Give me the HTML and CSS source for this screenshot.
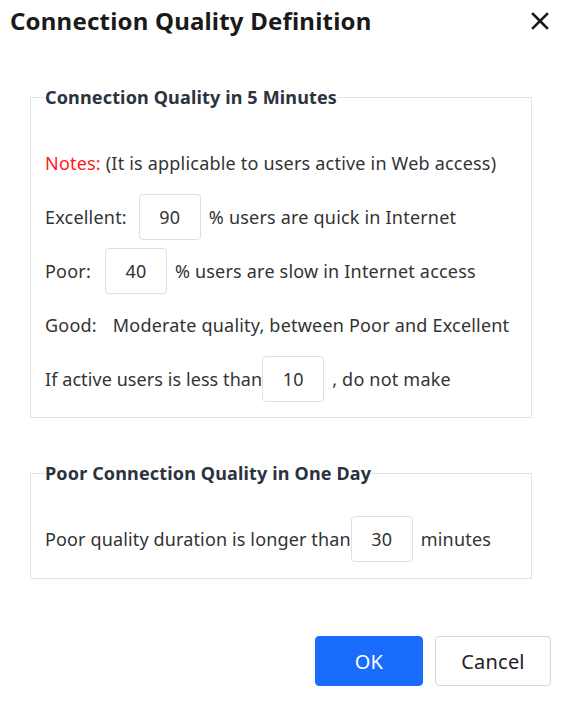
FILE: index.html
```html
<!DOCTYPE html>
<html>
<head>
<meta charset="utf-8">
<link rel="stylesheet" href="styles.css">
</head>
<body>
<div class="dialog">
  <div class="header">
    <h1 class="title">Connection Quality Definition</h1>
    <span class="close">
      <svg width="18" height="18" viewBox="0 0 18 18"><path d="M2 2 L16 16 M16 2 L2 16" stroke="#1a1a1a" stroke-width="2.6" stroke-linecap="square"/></svg>
    </span>
  </div>

  <fieldset class="group group-first">
    <legend class="legend">Connection Quality in 5 Minutes</legend>
    <div class="row"><span class="notes">Notes:</span>&nbsp;(It is applicable to users active in Web access)</div>
    <div class="row"><span class="label label-exc">Excellent:</span><span class="field">90</span><span class="after">% users are quick in Internet</span></div>
    <div class="row"><span class="label label-poor">Poor:</span><span class="field">40</span><span class="after">% users are slow in Internet access</span></div>
    <div class="row"><span class="label label-good">Good:</span><span>Moderate quality, between Poor and Excellent</span></div>
    <div class="row"><span class="lead">If active users is less than</span><span class="field">10</span><span class="after">, do not make</span></div>
  </fieldset>

  <fieldset class="group group-second">
    <legend class="legend">Poor Connection Quality in One Day</legend>
    <div class="row"><span class="lead lead-long">Poor quality duration is longer than</span><span class="field">30</span><span class="after">minutes</span></div>
  </fieldset>

  <div class="footer">
    <button class="btn btn-primary">OK</button>
    <button class="btn btn-default">Cancel</button>
  </div>
</div>
</body>
</html>
```

FILE: styles.css
```css
html, body {
  margin: 0;
  padding: 0;
  background: #ffffff;
}
body {
  font-family: "Noto Sans", "Open Sans", sans-serif;
  color: #333333;
  font-size: 18px;
  letter-spacing: 0.2px;
}
.dialog {
  width: 567px;
  height: 701px;
  box-sizing: border-box;
}
.header {
  display: flex;
  align-items: center;
  justify-content: space-between;
  height: 42px;
  padding: 0 18px 0 10px;
}
.title {
  margin: 0;
  font-size: 24px;
  font-weight: 700;
  color: #1a1a1a;
  line-height: 42px;
  letter-spacing: 0.2px;
}
.close {
  display: flex;
  width: 18px;
  height: 18px;
}
.group {
  margin: 0 35px 0 30px;
  padding: 0 14px 0 14px;
  border: 1px solid #e2e2ea;
}
.group-first {
  margin-top: 44px;
  padding-top: 32px;
  padding-bottom: 15px;
}
.group-second {
  margin-top: 44px;
  padding-top: 32px;
  padding-bottom: 16px;
}
.legend {
  padding: 0;
  font-size: 18px;
  font-weight: 700;
  color: #2b3240;
  line-height: 22px;
  letter-spacing: 0.15px;
}
.row {
  display: flex;
  align-items: center;
  height: 46px;
  margin-top: 8px;
  white-space: nowrap;
}
.row:first-of-type {
  margin-top: 0;
}
.notes {
  color: #ff1a1a;
}
.lead { letter-spacing: 0.08px; }
.lead-long { letter-spacing: 0.14px; }
.label-exc { margin-right: 12px; }
.label-poor { margin-right: 14px; }
.label-good { margin-right: 16px; }
.field {
  display: flex;
  align-items: center;
  justify-content: center;
  width: 60px;
  height: 44px;
  border: 1px solid #dcdfe6;
  border-radius: 4px;
  color: #333333;
  margin-right: 8px;
}
.footer {
  display: flex;
  justify-content: flex-end;
  gap: 12px;
  margin-top: 57px;
  padding-right: 16px;
}
.btn {
  height: 50px;
  font-family: "Noto Sans", "Open Sans", sans-serif;
  font-size: 20px;
  border-radius: 4px;
  cursor: pointer;
  letter-spacing: 0.2px;
}
.btn-primary {
  width: 108px;
  background: #1a6dfc;
  color: #ffffff;
  border: 1px solid #1a6dfc;
}
.btn-default {
  width: 116px;
  background: #ffffff;
  color: #222222;
  border: 1px solid #d4d7de;
}
```
